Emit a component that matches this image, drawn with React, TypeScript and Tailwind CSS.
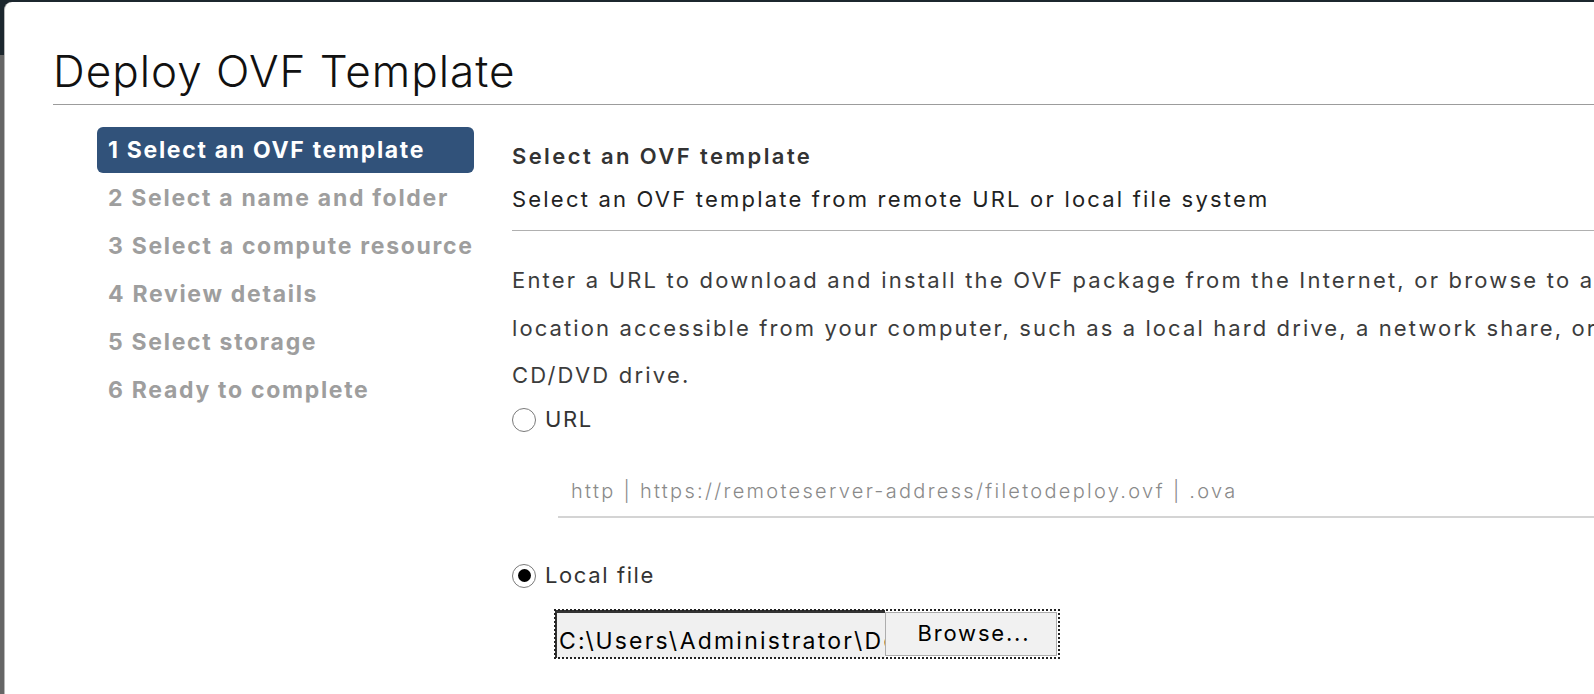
import { useState } from 'react'

const steps = [
  '1 Select an OVF template',
  '2 Select a name and folder',
  '3 Select a compute resource',
  '4 Review details',
  '5 Select storage',
  '6 Ready to complete',
]

// the original face is very wide, so Inter gets a bit of tracking
const body = "font-['Inter','Open_Sans',sans-serif]"

function Radio({ checked, onClick, label }: { checked: boolean; onClick: () => void; label: string }) {
  return (
    <button onClick={onClick} className="flex h-[40px] items-center gap-[9px]">
      <span className="flex h-[24px] w-[24px] items-center justify-center rounded-full border-[1.5px] border-[#7a7a7a] bg-white">
        {checked && <span className="h-[13px] w-[13px] rounded-full bg-black" />}
      </span>
      <span className="text-[22px] tracking-[1.6px] text-[#333]">{label}</span>
    </button>
  )
}

export default function App() {
  const [source, setSource] = useState<'url' | 'local'>('local')

  return (
    <div className={`h-[694px] w-full overflow-hidden bg-[linear-gradient(to_bottom,#1c272e_55px,#666_55px)] pl-[4px] pt-[2px] ${body}`}>
      <div className="h-full overflow-hidden rounded-tl-[8px] border-l border-[#b8b8b8] bg-white pl-[48px]">
        <div className="h-[103px] border-b border-[#9c9c9c] pt-[44px]">
          <h1 className="text-[44px] leading-[50px] font-light tracking-[1px] text-[#111]">Deploy OVF Template</h1>
        </div>

        <div className="flex">
          <nav className="ml-[44px] mt-[22px] flex w-[377px] shrink-0 flex-col gap-[2px]">
            {steps.map((s, i) => (
              <div
                key={s}
                className={`flex h-[46px] items-center whitespace-nowrap rounded-[6px] pl-[11px] text-[23px] font-bold tracking-[1.7px] ${i === 0 ? 'bg-[#31527a] text-white' : 'text-[#9e9e9e]'}`}
              >
                {s}
              </div>
            ))}
          </nav>

          <div className="ml-[38px] min-w-0 flex-1 pt-[28px]">
            <div className="border-b border-[#b0b0b0] pb-[11px]">
              <h2 className="flex h-[46px] items-center text-[22px] font-semibold tracking-[2.4px] text-[#333]">Select an OVF template</h2>
              <p className="flex h-[40px] items-center whitespace-nowrap text-[22px] tracking-[2.2px] text-[#222]">
                Select an OVF template from remote URL or local file system
              </p>
            </div>

            <div className="mt-[26px] whitespace-nowrap text-[22px] leading-[47.5px] text-[#3c3c3c]">
              <p className="tracking-[2.2px]">Enter a URL to download and install the OVF package from the Internet, or browse to a</p>
              <p className="tracking-[2.1px]">location accessible from your computer, such as a local hard drive, a network share, or a</p>
              <p className="tracking-[2.2px]">CD/DVD drive.</p>
            </div>

            <Radio checked={source === 'url'} onClick={() => setSource('url')} label="URL" />

            <div className="ml-[46px] mt-[26px] flex h-[52px] items-center border-b-2 border-[#d4d4d4] pl-[13px]">
              <span className="whitespace-nowrap text-[20px] font-light tracking-[2.3px] text-[#8a8a8a]">
                http | https://remoteserver-address/filetodeploy.ovf | .ova
              </span>
            </div>

            <div className="mt-[38px]">
              <Radio checked={source === 'local'} onClick={() => setSource('local')} label="Local file" />
            </div>

            <div className="ml-[43px] mt-[14px] flex h-[48px] w-[504px] outline-2 outline-dotted outline-[#222] -outline-offset-1">
              <div className="flex w-[330px] items-end overflow-hidden border-l-2 border-t-[3px] border-[#333] bg-[#f0f0f0] pb-[5px] pl-[2px]">
                <span className="whitespace-nowrap text-[23px] leading-none tracking-[2.2px] text-black">C:\Users\Administrator\Desktop\vm.ova</span>
              </div>
              <button className="my-[2px] mr-[2px] flex-1 border border-[#adadad] bg-[#f1f1f1] pl-[6px] text-[22px] tracking-[1.8px] text-black">
                Browse...
              </button>
            </div>
          </div>
        </div>
      </div>
    </div>
  )
}
